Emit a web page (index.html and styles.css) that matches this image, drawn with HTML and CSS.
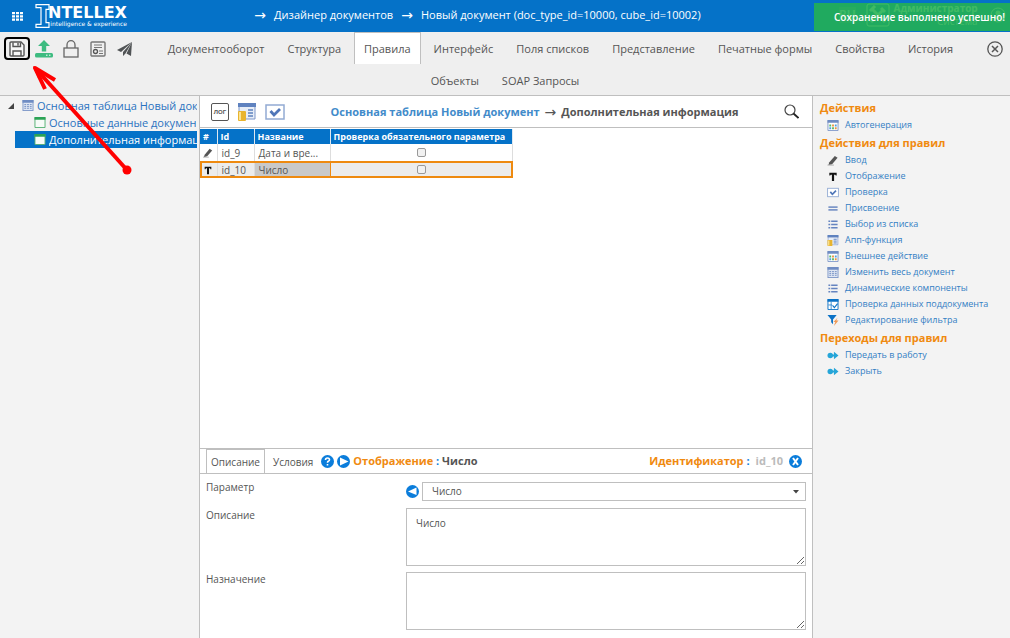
FILE: index.html
```html
<!DOCTYPE html>
<html lang="ru">
<head>
<meta charset="utf-8">
<meta name="viewport" content="width=device-width, initial-scale=1">
<title>Дизайнер документов</title>
<link rel="stylesheet" href="styles.css">
</head>
<body>
<svg class="defs" aria-hidden="true">
  <symbol id="i-table" viewBox="0 0 12 12"><rect x="0.5" y="0.5" width="11" height="11" fill="#dfe6f3" stroke="#7e97c8"/><path d="M0 0h12v3H0z" fill="#6f8cc3"/><path d="M2 5h8M2 7h8M2 9h8" stroke="#6f8cc3" stroke-dasharray="2 1"/></symbol>
  <symbol id="i-window" viewBox="0 0 12 12"><path d="M0.5 0.5h11v11H.5z" fill="#f6fbf7" stroke="#4fae6e"/><path d="M0 0h12v3H0z" fill="#2ba355"/></symbol>
  <symbol id="i-pencil" viewBox="0 0 12 12"><path d="M2 8l6-7 3 2-6 7-4 1z" fill="#555"/><path d="M0 11h7" stroke="#aaa"/></symbol>
  <symbol id="i-text" viewBox="0 0 12 12"><path d="M2 2h8v3H9L8.500 4H7.200v7H4.800V4H3.500L3 5H2z" fill="#111"/></symbol>
  <symbol id="i-check" viewBox="0 0 20 16"><rect x="1" y="1" width="18" height="14" fill="#fff" stroke="#93abd3" stroke-width="1.500"/><path d="M5.500 7l3.500 4 6-6" fill="none" stroke="#4f76b8" stroke-width="2.800"/></symbol>
  <symbol id="i-equal" viewBox="0 0 12 12"><path d="M1 4.500h10M1 7.500h10" stroke="#7e97c8" stroke-width="1.800"/></symbol>
  <symbol id="i-list" viewBox="0 0 12 12"><path d="M1 2.500h2M1 6h2M1 9.500h2M4 2.500h7M4 6h7M4 9.500h7" stroke="#6584c0" stroke-width="1.600"/></symbol>
  <symbol id="i-app" viewBox="0 0 18 18"><path d="M1 1h16v15H1z" fill="#e7edf7" stroke="#7e97c8"/><path d="M0 0h18v4H0z" fill="#5f82bf"/><path d="M10 7h5M10 10h5M10 13h5" stroke="#5f82bf" stroke-width="1.500"/><rect x="0" y="8" width="8" height="10" rx="1" fill="#e8b42f"/><path d="M2 9v8" stroke="#fbe494" stroke-width="2"/></symbol>
  <symbol id="i-color" viewBox="0 0 12 12"><path d="M.5.5h11v11H.5z" fill="#fff" stroke="#7e97c8"/><path d="M0 0h12v3H0z" fill="#6f8cc3"/><path d="M2 5h2v2H2zM5 8h2v2H5z" fill="#58b764"/><path d="M5 5h2v2H5zM8 8h2v2H8z" fill="#ea9341"/><path d="M8 5h2v2H8zM2 8h2v2H2z" fill="#4fa0dd"/></symbol>
  <symbol id="i-subdoc" viewBox="0 0 12 12"><path d="M.5.5h11v11H.5z" fill="#fff" stroke="#0b72c6"/><path d="M1 6.500h4M4 3v8" fill="none" stroke="#0b72c6" stroke-width=".8"/><path d="M0 0h12v3H0z" fill="#0b72c6"/><path d="M5.500 7l2 2.500L11 5" fill="none" stroke="#0b72c6" stroke-width="1.200"/></symbol>
  <symbol id="i-filter" viewBox="0 0 12 12"><path d="M0 0h10L6 5v5L4 8V5z" fill="#0b72c6"/><path d="M11 3L6.500 7.500h2L7 12l5-6H9.500z" fill="#f09a55"/></symbol>
  <symbol id="i-go" viewBox="0 0 12 12"><circle cx="3" cy="6" r="3" fill="#25a5d8"/><path d="M5 5h2V2l5 4-5 4V7H5z" fill="#25a5d8"/></symbol>
</svg>

<header class="topbar">
  <button class="apps" aria-label="Приложения"><svg viewBox="0 0 11 9"><path d="M0 0h3v2.200H0zM4 0h3v2.200H4zM8 0h3v2.200H8zM0 3.300h3v2.200H0zM4 3.300h3v2.200H4zM8 3.300h3v2.200H8zM0 6.600h3v2.200H0zM4 6.600h3v2.200H4zM8 6.600h3v2.200H8z" fill="#fff"/></svg></button>
  <a class="logo" href="#">
    <svg class="logo-mark" viewBox="0 0 16 24"><path d="M1 .7h13v4.600h-3v13.400h3v4.600H1v-3h5V3.700H1z" fill="#0572c8" stroke="#fff" stroke-width="1.200"/></svg>
    <span class="logo-words"><span class="logo-name">NTELLEX</span><span class="logo-sub">intelligence &amp; experience</span></span>
  </a>
  <nav class="crumbs"><span class="arrow">→</span><a href="#">Дизайнер документов</a><span class="arrow">→</span><a href="#">Новый документ (doc_type_id=10000, cube_id=10002)</a></nav>
  <div class="user">
    <span class="lang">RU</span>
    <svg class="tools" viewBox="0 0 24 24"><rect x="1" y="1" width="22" height="22" rx="2" fill="none" stroke="#fff"/><path d="M6 6l13 13M18 6L5 19M4 8l5-5M15 5l4 4" stroke="#fff" stroke-width="3"/></svg>
    <span class="who"><b>Администратор</b><span>Система</span></span>
    <svg class="avatar" viewBox="0 0 16 16"><circle cx="8" cy="8" r="7" fill="none" stroke="#fff"/><circle cx="8" cy="6" r="2.500" fill="#fff"/><path d="M3.500 12c1-4 8-4 9 0z" fill="#fff"/></svg>
  </div>
  <div class="toast" role="status">Сохранение выполнено успешно!</div>
</header>

<div class="toolbar">
  <div class="toolbar-row">
    <div class="tools-left">
      <button class="tool save" aria-label="Сохранить"><svg viewBox="0 0 16 16"><path d="M1 2q0-1 1-1h10l3 3v10q0 1-1 1H2q-1 0-1-1z" fill="#f6f6f6" stroke="#555" stroke-width="1.400"/><path d="M4 1.500v4h7.500v-4M9 2v2.500M4 15v-5h8v5" fill="none" stroke="#555" stroke-width="1.400"/></svg></button>
      <button class="tool" aria-label="Загрузить"><svg viewBox="0 0 18 18"><path d="M9 0l6 6h-3.800v5.500H6.800V6H3z" fill="#3dbb80"/><rect x="0" y="13" width="18" height="4.500" rx="1.500" fill="#3dbb80"/><path d="M11 15.200h1.500M14 15.200h1.500" stroke="#fff"/></svg></button>
      <button class="tool" aria-label="Заблокировать"><svg viewBox="0 0 18 18"><rect x="2" y="8" width="14" height="9" fill="none" stroke="#666" stroke-width="1.300"/><path d="M5 8V5a4 4.300 0 0 1 8 0v3" fill="none" stroke="#666" stroke-width="1.300"/></svg></button>
      <button class="tool" aria-label="Сертификат"><svg viewBox="0 0 18 18"><rect x="2" y="2" width="14" height="14" rx="1" fill="none" stroke="#777" stroke-width="1.400"/><path d="M5 5h8M5 7.500h8M10 11h4M10 13.500h4" stroke="#777"/><circle cx="6.500" cy="11.500" r="2" fill="none" stroke="#555" stroke-width="1.300"/></svg></button>
      <button class="tool" aria-label="Отправить"><svg viewBox="0 0 18 18"><path d="M16 2L1 10l4 2zM16 2L7 12v4l2.500-2.500zM16 2l-5.500 11.500L15 16z" fill="#505355"/></svg></button>
    </div>
    <nav class="tabs">
      <a href="#">Документооборот</a><a href="#">Структура</a><a href="#" class="active" aria-current="page">Правила</a><a href="#">Интерфейс</a><a href="#">Поля списков</a><a href="#">Представление</a><a href="#">Печатные формы</a><a href="#">Свойства</a><a href="#">История</a>
    </nav>
    <button class="close" aria-label="Закрыть окно"><svg viewBox="0 0 16 16"><circle cx="8" cy="8" r="7.200" fill="none" stroke="#555" stroke-width="1.300"/><path d="M5 5l6 6M11 5l-6 6" stroke="#555" stroke-width="1.500"/></svg></button>
  </div>
  <nav class="tabs tabs-more"><a href="#">Объекты</a><a href="#">SOAP Запросы</a></nav>
</div>

<main class="workspace">
  <aside class="tree">
    <a href="#" class="node root"><svg class="twist" viewBox="0 0 6 6"><path d="M6 0v6H0z" fill="#444"/></svg><svg class="ic"><use href="#i-table"/></svg><span>Основная таблица Новый док</span></a>
    <a href="#" class="node"><svg class="ic"><use href="#i-window"/></svg><span>Основные данные докумен</span></a>
    <a href="#" class="node selected"><svg class="ic"><use href="#i-window"/></svg><span>Дополнительная информац</span></a>
  </aside>

  <section class="center">
    <div class="center-head">
      <button class="log">ЛОГ</button>
      <button class="head-btn" aria-label="Приложение"><svg><use href="#i-app"/></svg></button>
      <button class="head-btn" aria-label="Проверить"><svg><use href="#i-check"/></svg></button>
      <div class="path"><a href="#">Основная таблица Новый документ</a><span class="arrow">→</span><span>Дополнительная информация</span></div>
      <button class="search" aria-label="Поиск"><svg viewBox="0 0 15 15"><circle cx="6" cy="6" r="5" fill="none" stroke="#444" stroke-width="1.200"/><path d="M9.500 9.500l5 4.500" stroke="#222" stroke-width="1.800"/></svg></button>
    </div>
    <div class="grid-wrap">
      <table class="grid">
        <colgroup><col class="c-mark"><col class="c-id"><col class="c-name"><col class="c-check"></colgroup>
        <thead><tr><th>#</th><th>Id</th><th>Название</th><th>Проверка обязательного параметра</th></tr></thead>
        <tbody>
          <tr><td><svg class="mark"><use href="#i-pencil"/></svg></td><td>id_9</td><td>Дата и вре...</td><td class="mid"><input type="checkbox" aria-label="Проверка id_9"></td></tr>
          <tr class="current"><td><svg class="mark"><use href="#i-text"/></svg></td><td>id_10</td><td class="cell">Число</td><td class="mid"><input type="checkbox" aria-label="Проверка id_10"></td></tr>
        </tbody>
      </table>
    </div>
    <div class="details">
      <div class="details-head">
        <button class="dtab on">Описание</button><button class="dtab">Условия</button>
        <button class="round" aria-label="Справка"><svg viewBox="0 0 13 13"><circle cx="6.500" cy="6.500" r="6.500" fill="#0b7ddb"/><path d="M4.500 5q0-2 2-2t2 1.800q0 1-1.200 1.500-.8.400-.8 1.400M6.500 9v1.500" fill="none" stroke="#fff" stroke-width="1.600"/></svg></button>
        <button class="round" aria-label="Вперёд"><svg viewBox="0 0 13 13"><circle cx="6.500" cy="6.500" r="6.500" fill="#0b7ddb"/><path d="M3 2.500l8.500 4-8.500 4z" fill="#fff"/></svg></button>
        <div class="what"><span class="orange">Отображение</span> <span class="blue">:</span> Число</div>
        <div class="ident"><span class="orange">Идентификатор</span> <span class="blue">:</span><span class="gray">id_10</span></div>
        <button class="round" aria-label="Закрыть"><svg viewBox="0 0 13 13"><circle cx="6.500" cy="6.500" r="6.500" fill="#0b7ddb"/><path d="M4 3l5 7M9 3l-5 7" stroke="#fff" stroke-width="2"/></svg></button>
      </div>
      <form class="form">
        <label for="param">Параметр</label>
        <div class="param"><button type="button" class="round" aria-label="Назад"><svg viewBox="0 0 13 13"><circle cx="6.500" cy="6.500" r="6.500" fill="#0b7ddb"/><path d="M10.500 2.500L2 6.500l8.500 3.500z" fill="#fff"/></svg></button>
          <div class="select"><select id="param"><option>Число</option></select><svg viewBox="0 0 6 4"><path d="M0 0h6L3 3.500z" fill="#444"/></svg></div></div>
        <label for="descr">Описание</label>
        <textarea id="descr">Число</textarea>
        <label for="purpose">Назначение</label>
        <textarea id="purpose"></textarea>
      </form>
    </div>
  </section>

  <aside class="actions">
    <h2>Действия</h2>
    <a href="#"><svg><use href="#i-color"/></svg>Автогенерация</a>
    <h2>Действия для правил</h2>
    <a href="#"><svg><use href="#i-pencil"/></svg>Ввод</a>
    <a href="#"><svg><use href="#i-text"/></svg>Отображение</a>
    <a href="#"><svg><use href="#i-check"/></svg>Проверка</a>
    <a href="#"><svg><use href="#i-equal"/></svg>Присвоение</a>
    <a href="#"><svg><use href="#i-list"/></svg>Выбор из списка</a>
    <a href="#"><svg><use href="#i-app"/></svg>Апп-функция</a>
    <a href="#"><svg><use href="#i-color"/></svg>Внешнее действие</a>
    <a href="#"><svg><use href="#i-table"/></svg>Изменить весь документ</a>
    <a href="#"><svg><use href="#i-list"/></svg>Динамические компоненты</a>
    <a href="#"><svg><use href="#i-subdoc"/></svg>Проверка данных поддокумента</a>
    <a href="#"><svg><use href="#i-filter"/></svg>Редактирование фильтра</a>
    <h2>Переходы для правил</h2>
    <a href="#"><svg><use href="#i-go"/></svg>Передать в работу</a>
    <a href="#"><svg><use href="#i-go"/></svg>Закрыть</a>
  </aside>
</main>
<svg class="pointer" viewBox="0 0 110 120" aria-hidden="true"><path d="M102 110L11 9" fill="none" stroke="#f00" stroke-width="4"/><path d="M30 20L10 8l10 21" fill="none" stroke="#f00" stroke-width="4" stroke-linejoin="round"/><path d="M8 6l11 6-6 6z" fill="#f00"/><circle cx="102" cy="110" r="4.500" fill="#f00"/></svg>
</body>
</html>
```
FILE: styles.css
```css
* { box-sizing: border-box; }
body {
  margin: 0;
  min-height: 100vh;
  display: flex;
  flex-direction: column;
  position: relative;
  font: 10px/16px "Open Sans", "Liberation Sans", sans-serif;
  color: #555;
  background: #fff;
}
a { color: inherit; text-decoration: none; }
button { border: 0; padding: 0; background: none; font: inherit; color: inherit; display: block; }
svg { display: block; flex: none; }
.defs { position: absolute; width: 0; height: 0; }
.arrow { font-family: "DejaVu Sans", sans-serif; font-weight: 400; }

.topbar { position: relative; display: flex; align-items: center; height: 32px; background: #0572c8; color: #fff; }
.apps { margin-left: 12px; }
.apps svg { width: 11px; height: 9px; }
.logo { display: flex; align-items: center; margin-left: 12px; width: 93px; }
.logo-mark { width: 16px; height: 24px; }
.logo-words { display: flex; flex-direction: column; align-items: flex-end; margin-left: -3px; }
.logo-name { font: 700 16px/16px "DejaVu Sans", sans-serif; }
.logo-sub { font: 6px/6px "DejaVu Sans", sans-serif; white-space: nowrap; }
.crumbs { flex: 1; display: flex; gap: 8px; justify-content: center; margin-left: -12px; font-size: 11px; font-weight: 500; white-space: nowrap; padding-bottom: 3px; }
.crumbs .arrow { font-size: 14px; }
.user { display: flex; align-items: center; width: 171px; gap: 4px; padding-bottom: 2px; }
.lang { width: 20px; text-align: center; background: #3987c4; font-size: 12px; font-weight: 600; margin-right: 6px; }
.tools { width: 24px; height: 24px; }
.who { display: flex; flex-direction: column; align-items: flex-end; flex: 1; line-height: 13px; }
.avatar { width: 16px; height: 16px; margin: 0 8px; }
.toast {
  position: absolute; right: 0; top: 3px; width: 196px; height: 28px;
  padding-right: 5px; text-align: right; line-height: 29px; font-weight: 600;
  background: rgba(36, 178, 80, 0.88); white-space: nowrap;
}

.toolbar { background: #efefef; border-bottom: 1px solid #bfbfbf; height: 64px; }
.toolbar-row { display: flex; justify-content: space-between; padding: 0 7px 0 4px; }
.tools-left { display: flex; align-items: center; gap: 9px; height: 33px; }
.tool svg { width: 18px; height: 18px; }
.tool.save { display: flex; align-items: center; justify-content: center; width: 26px; height: 23px; border: 2px solid #000; border-radius: 4px; margin-right: -4px; }
.save svg { width: 16px; height: 16px; }
.tabs { display: flex; gap: 3px; font-size: 11px; line-height: 32px; white-space: nowrap; }
.tabs a { padding: 0 9px; border: solid transparent; border-width: 1px 1px 0; height: 32px; }
.tabs .active { background: #fff; border-color: #bfbfbf; }
.tabs-more { justify-content: center; line-height: 30px; }
.close { align-self: center; }
.close svg { width: 16px; height: 16px; }

.workspace { flex: 1; display: grid; grid-template-columns: 199px minmax(0, 1fr) 197px; }
.tree { background: #f3f3f3; padding: 1px 2px 0 8px; font-size: 11px; line-height: 17px; color: #2a72c0; }
.node { display: flex; align-items: center; gap: 3px; height: 17px; margin-left: 7px; padding-left: 19px; }
.node span { overflow: hidden; white-space: nowrap; }
.node .ic { width: 12px; height: 11px; }
.root { margin-left: 0; padding-left: 0; }
.twist { width: 6px; height: 6px; margin-right: 5px; }
.selected { background: #0572c8; color: #fff; }

.center { display: flex; flex-direction: column; border: solid #bfbfbf; border-width: 0 1px; }
.center-head { display: flex; align-items: center; height: 32px; gap: 8px; padding: 0 13px 0 11px; border-bottom: 1px solid #bfbfbf; }
.log { width: 18px; height: 18px; border: 1px solid #555; border-radius: 2px; font: 700 6px/16px "Liberation Sans", sans-serif; text-align: center; }
.head-btn svg { width: 20px; height: 18px; }
.path { flex: 1; display: flex; justify-content: center; gap: 5px; font-size: 11px; font-weight: 700; white-space: nowrap; }
.path a { color: #428bca; }
.path .arrow { font-size: 14px; }
.search svg { width: 15px; height: 15px; }

.grid-wrap { flex: 1; padding-top: 1px; }
.grid { border-collapse: collapse; table-layout: fixed; width: 313px; line-height: 14px; }
.c-mark { width: 17px; }
.c-id { width: 37px; }
.c-name { width: 76px; }
.grid th { background: #0572c8; color: #fff; font-size: 9px; font-weight: 700; text-align: left; padding: 0 3px; border-right: 1px solid #dfe8f0; white-space: nowrap; height: 15px; }
.grid td { padding: 0 4px; height: 17px; border-right: 1px solid #ddd; white-space: nowrap; }
.grid .mid { text-align: center; }
.grid input { appearance: none; display: block; width: 9px; height: 9px; margin: 0 auto; border: 1px solid #999; border-radius: 2px; background: #f1f1f1; }
.mark { width: 10px; height: 10px; margin-left: -1px; }
.current { outline: 2px solid #ee8a10; outline-offset: -2px; background: #ececec; }
.grid .current .cell { background: #c9c9c9; border: solid #ee8a10; border-width: 0 1px; }

.details { border-top: 1px solid #bfbfbf; }
.details-head { display: flex; align-items: center; height: 25px; padding: 0 10px 0 6px; gap: 3px; border-bottom: 1px solid #bfbfbf; }
.dtab { height: 24px; padding: 0 4px; border: solid transparent; border-width: 1px 1px 0; }
.dtab.on { border-color: #bfbfbf; }
.round svg { width: 13px; height: 13px; }
.what, .ident { font-size: 11px; font-weight: 700; white-space: nowrap; }
.ident { margin-left: auto; margin-right: 3px; }
.orange { color: #f08a10; }
.blue { color: #0b7ddb; }
.gray { color: #bbb; margin-left: 6px; }
.form { display: grid; grid-template-columns: 200px minmax(0, 1fr); row-gap: 6px; padding: 6px 6px 8px; }
.form label { line-height: 14px; }
.param { display: flex; align-items: center; gap: 3px; height: 22px; }
.select { position: relative; flex: 1; }
.select select { appearance: none; display: block; width: 100%; height: 19px; padding: 0 9px; border: 1px solid #bfbfbf; border-radius: 0; background: #fff; color: inherit; font: inherit; }
.select svg { position: absolute; right: 7px; top: 8px; width: 6px; height: 4px; pointer-events: none; }
.form textarea { display: block; width: 100%; height: 58px; padding: 6px 9px; border: 1px solid #bfbfbf; color: inherit; font: inherit; resize: vertical; }

.actions { background: #f3f3f3; padding: 2px 8px 0 7px; color: #337fc4; font-size: 9px; }
.actions h2 { margin: 0; color: #f08a10; font-size: 11px; line-height: 19px; font-weight: 700; }
.actions a { display: flex; align-items: center; gap: 6px; height: 16px; padding-left: 7px; white-space: nowrap; }
.actions svg { width: 12px; height: 11px; }

.pointer { position: absolute; left: 25px; top: 60px; width: 110px; height: 120px; pointer-events: none; }
```
